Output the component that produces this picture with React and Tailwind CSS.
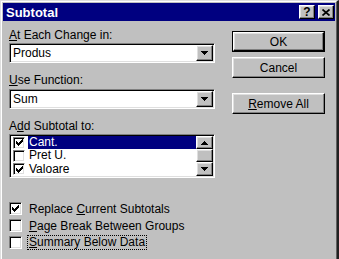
import React from 'react';

const font = { fontFamily: '"Liberation Sans", Arial, sans-serif' };

const sunken =
  'border border-t-[#808080] border-l-[#808080] border-b-white border-r-white shadow-[inset_1px_1px_0_#000,inset_-1px_-1px_0_#dfdfdf] p-[1px]';
const raised =
  'border border-t-white border-l-white border-b-black border-r-black shadow-[inset_-1px_-1px_0_#808080,inset_1px_1px_0_#dfdfdf] bg-[#c0c0c0]';

const Check = () => (
  <svg width="7" height="7" viewBox="0 0 7 7" shapeRendering="crispEdges">
    <rect x="6" y="0" width="1" height="1" />
    <rect x="5" y="1" width="2" height="1" />
    <rect x="0" y="2" width="1" height="1" />
    <rect x="4" y="2" width="3" height="1" />
    <rect x="0" y="3" width="2" height="1" />
    <rect x="3" y="3" width="3" height="1" />
    <rect x="0" y="4" width="5" height="1" />
    <rect x="1" y="5" width="3" height="1" />
    <rect x="2" y="6" width="1" height="1" />
  </svg>
);

const Box = ({ checked, size = 'w-[13px] h-[13px]' }) => (
  <div className={`${size} ${sunken} bg-white flex items-center justify-center shrink-0`}>
    {checked && <Check />}
  </div>
);

const Arrow = ({ up }) => (
  <svg width="7" height="4" viewBox="0 0 7 4" shapeRendering="crispEdges">
    {up ? <path d="M3 0h1v1h1v1h1v1h1v1H0V3h1V2h1V1h1z" /> : <path d="M0 0h7v1H6v1H5v1H4v1H3V3H2V2H1V1H0z" />}
  </svg>
);

const Combo = ({ value }) => (
  <div className={`h-[20px] w-[206px] ${sunken} bg-white flex`}>
    <div className="flex-1 pl-[2px] text-[12px] leading-[16px] text-black">{value}</div>
    <div className={`w-[17px] h-[16px] ${raised} flex items-center justify-center`}>
      <Arrow />
    </div>
  </div>
);

const Label = ({ u, rest, className = '' }) => (
  <div className={`h-[14px] text-[12px] leading-[14px] text-black ${className}`}>
    <u>{u}</u>
    {rest}
  </div>
);

const Button = ({ children, isDefault }) => (
  <div className={`w-[93px] h-[21px] ${isDefault ? 'border border-black' : ''}`}>
    <div className={`w-full h-full ${raised} flex items-center justify-center text-[12px] text-black`}>
      {children}
    </div>
  </div>
);

const rows = [
  { label: 'Cant.', checked: true, selected: true },
  { label: 'Pret U.', checked: false },
  { label: 'Valoare', checked: true },
];

export default function App() {
  return (
    <div className="w-[339px] h-[259px] bg-[#c0c0c0] overflow-hidden" style={font}>
      <div className="w-full h-[262px] border border-r-2 border-t-[#dfdfdf] border-l-[#dfdfdf] border-r-[#202020] border-b-black">
        <div className="w-full h-full border border-t-white border-l-white border-r-[#606060] border-b-[#808080] p-[1px]">
          <div className="h-[18px] bg-[#000080] flex items-center justify-between pl-[3px] pr-[1px]">
            <span className="text-[13px] font-bold text-white leading-none">Subtotal</span>
            <div className="flex gap-[3px]">
              <div className={`w-[16px] h-[14px] ${raised} flex items-center justify-center text-[12px] font-bold leading-none text-black`}>
                ?
              </div>
              <div className={`w-[16px] h-[14px] ${raised} flex items-center justify-center`}>
                <svg width="8" height="7" viewBox="0 0 8 7" stroke="black" strokeWidth="1.7">
                  <path d="M0.5 0.5L7.5 6.5M7.5 0.5L0.5 6.5" />
                </svg>
              </div>
            </div>
          </div>

          <div className="flex pl-[6px]">
            <div className="w-[206px] pt-[7px] flex flex-col">
              <Label u="A" rest="t Each Change in:" />
              <div className="mt-[1px]">
                <Combo value="Produs" />
              </div>
              <Label u="U" rest="se Function:" className="mt-[10px]" />
              <div className="mt-[2px]">
                <Combo value="Sum" />
              </div>
              <div className="mt-[10px] h-[14px] text-[12px] leading-[14px] text-black">
                A<u>d</u>d Subtotal to:
              </div>
              <div className={`mt-[1px] w-[206px] h-[44px] ${sunken} bg-white flex`}>
                <div className="flex-1 flex flex-col">
                  {rows.map((r) => (
                    <div key={r.label} className="h-[13.3px] flex items-center">
                      <div className="pl-[2px] pr-[3px]">
                        <Box checked={r.checked} size="w-[12px] h-[12px]" />
                      </div>
                      <div
                        className={`flex-1 h-full pl-[1px] text-[12px] leading-[13px] ${
                          r.selected ? 'bg-[#000080] text-white' : 'text-black'
                        }`}
                      >
                        {r.label}
                      </div>
                    </div>
                  ))}
                </div>
                <div className="w-[17px] flex flex-col bg-[#dfdfdf]">
                  <div className={`h-[13px] ${raised} flex items-center justify-center`}>
                    <Arrow up />
                  </div>
                  <div className={`h-[13px] ${raised}`} />
                  <div className={`h-[14px] ${raised} flex items-center justify-center`}>
                    <Arrow />
                  </div>
                </div>
              </div>

              <div className="mt-[22px] flex flex-col">
                <div className="h-[17px] flex items-center gap-[7px] text-[12px] text-black">
                  <Box checked />
                  <span>
                    Replace <u>C</u>urrent Subtotals
                  </span>
                </div>
                <div className="h-[17px] flex items-center gap-[7px] text-[12px] text-black whitespace-nowrap">
                  <Box />
                  <span>
                    <u>P</u>age Break Between Groups
                  </span>
                </div>
                <div className="h-[17px] flex items-center gap-[6px] text-[12px] text-black whitespace-nowrap">
                  <Box />
                  <span className="outline outline-1 outline-dotted outline-black px-[1px] leading-[13px]">
                    <u>S</u>ummary Below Data
                  </span>
                </div>
              </div>
            </div>

            <div className="ml-[17px] pt-[10px] flex flex-col">
              <Button isDefault>OK</Button>
              <div className="mt-[5px]">
                <Button>Cancel</Button>
              </div>
              <div className="mt-[15px]">
                <Button>
                  <span>
                    <u>R</u>emove All
                  </span>
                </Button>
              </div>
            </div>
          </div>
        </div>
      </div>
    </div>
  );
}
